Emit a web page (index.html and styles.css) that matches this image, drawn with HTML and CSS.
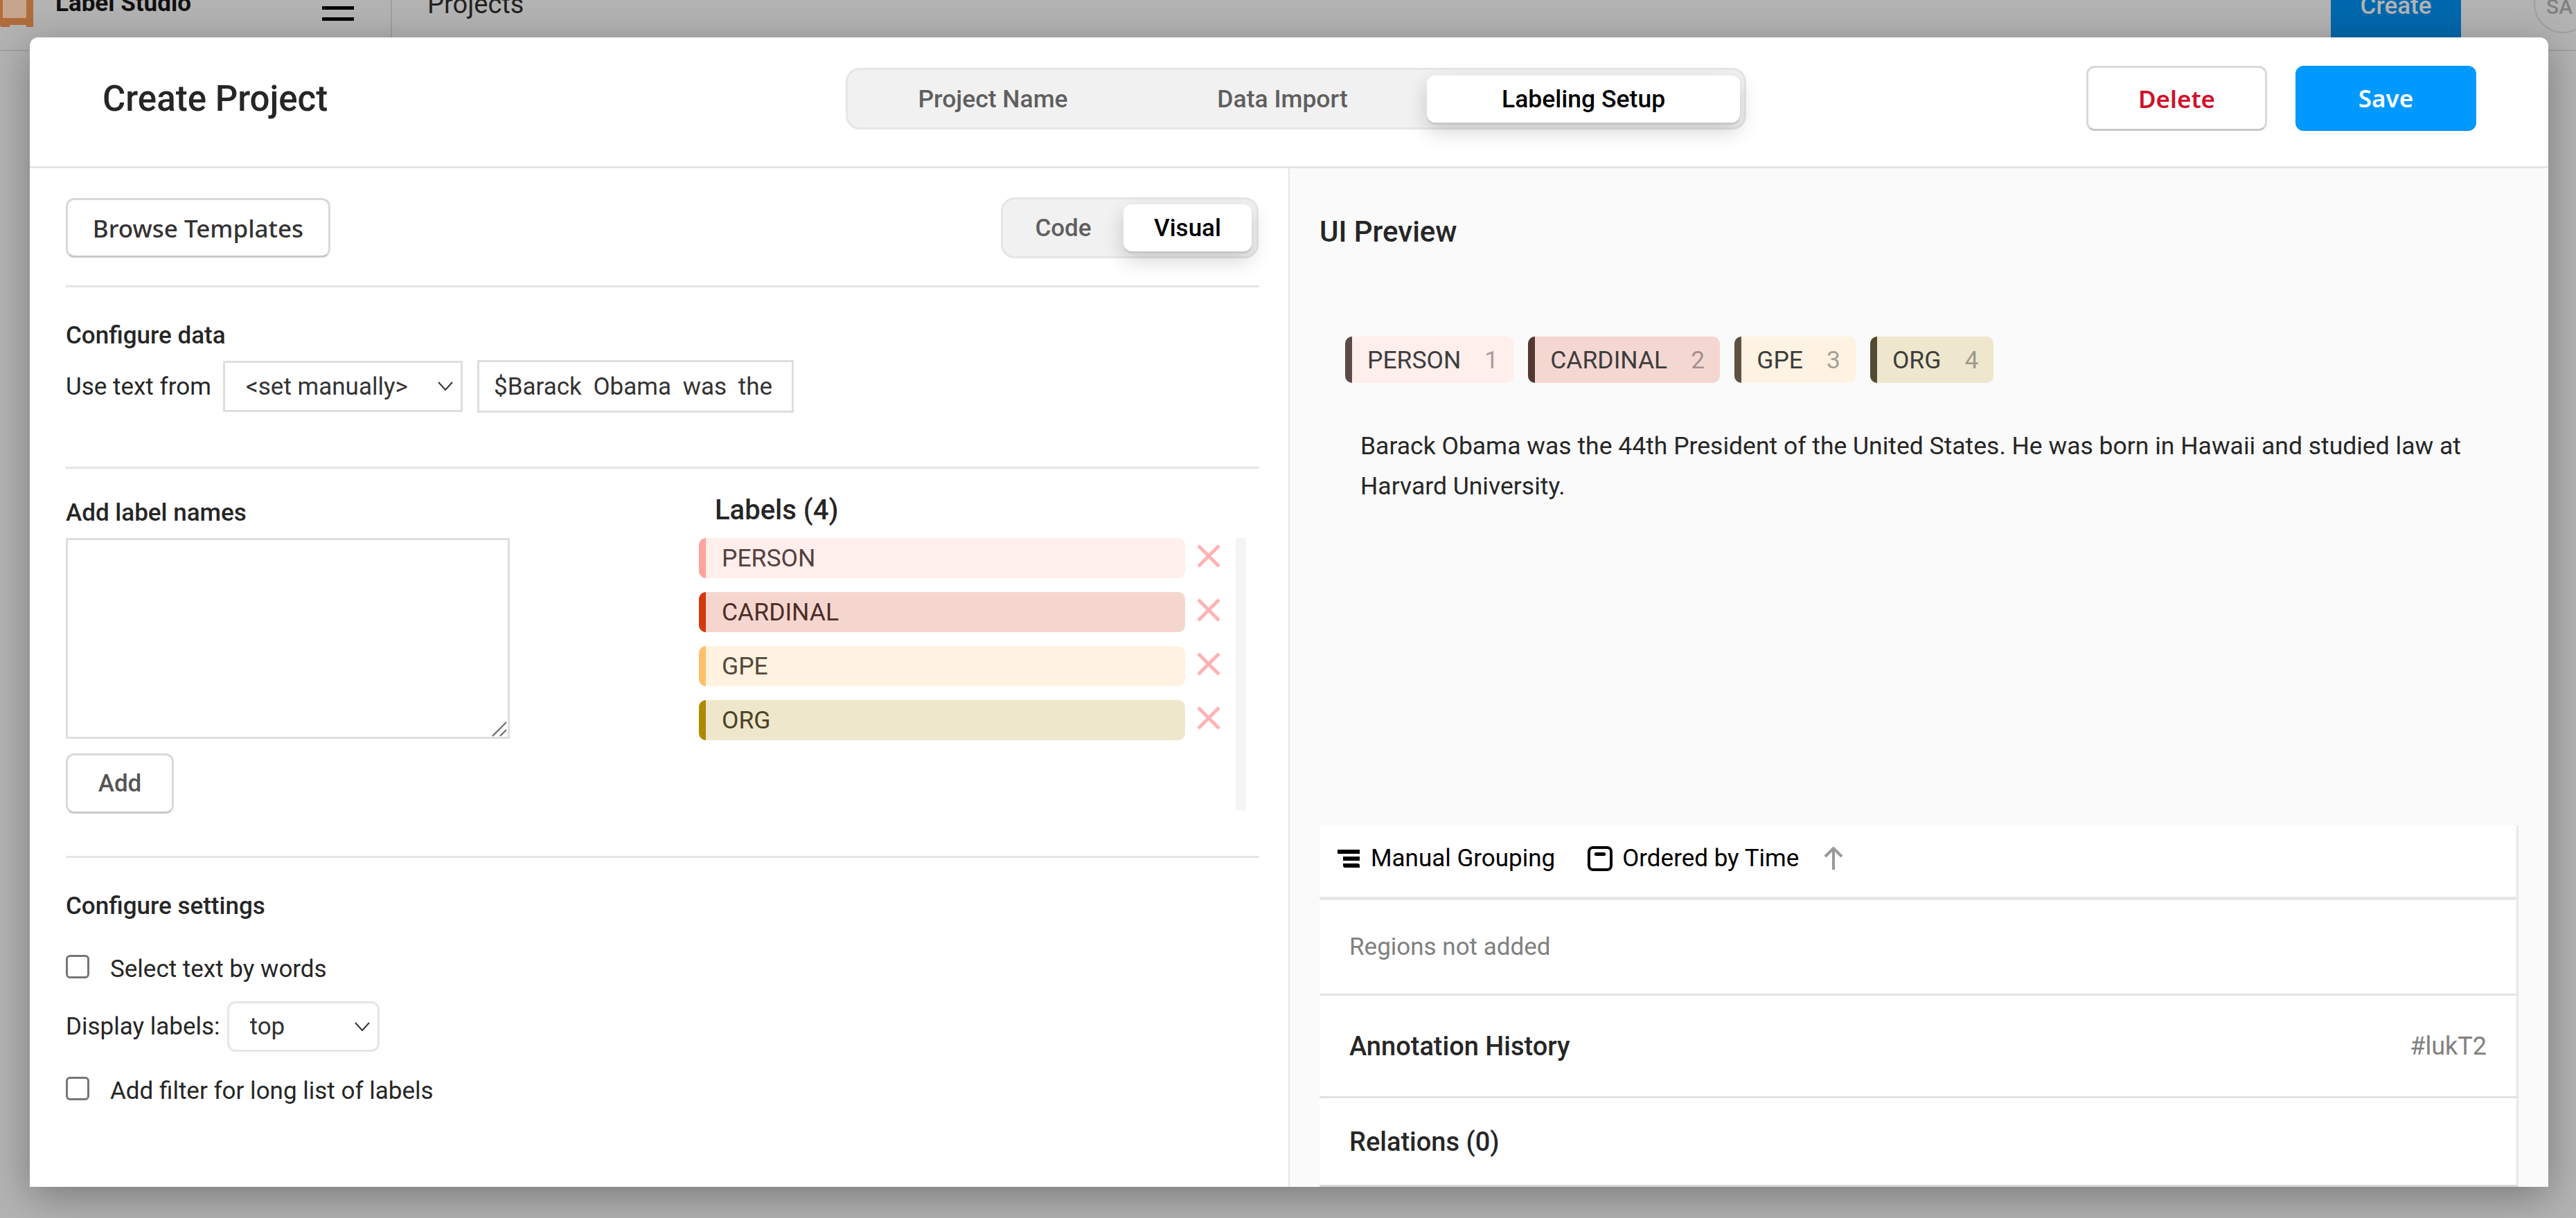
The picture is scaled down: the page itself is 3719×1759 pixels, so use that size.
FILE: index.html
```html
<!DOCTYPE html>
<html>
<head>
<meta charset="utf-8" />
<title>Create Project</title>
<link rel="stylesheet" href="styles.css">
</head>
<body>
	<!-- page behind the dialog -->
	<div class="topbar">
		<svg class="logo" width="49" height="40" viewBox="0 0 49 40"><path d="M4 0h34v26H4z" fill="#c8a48c"/><path d="M0 26h4V0h-4zM38 0h10v39h-10v-3H14v-10h24z" fill="#b06c3c"/><path d="M0 26h14v13H3a3 3 0 0 1-3-3z" fill="#b06c3c"/></svg>
		<span class="brand">Label Studio</span>
		<span class="burger"><i></i><i></i></span>
		<span class="crumb">Projects</span>
		<span class="create">Create</span>
		<span class="avatar">SA</span>
	</div>

	<div class="modal">
		<div class="modal-head">
			<h1 class="modal-title">Create Project</h1>
			<div class="toggle steps">
				<span class="toggle-item">Project Name</span>
				<span class="toggle-item">Data Import</span>
				<span class="toggle-item on">Labeling Setup</span>
			</div>
			<div class="actions">
				<button class="btn btn-delete">Delete</button>
				<button class="btn btn-save">Save</button>
			</div>
		</div>

		<div class="modal-body">
			<div class="config">
				<div class="config-bar">
					<button class="btn btn-browse">Browse Templates</button>
					<div class="toggle modes">
						<span class="toggle-item">Code</span>
						<span class="toggle-item on">Visual</span>
					</div>
				</div>

				<div class="section data">
					<h4 class="section-title">Configure data</h4>
					<div class="data-row">
						<label class="data-label">Use text from</label>
						<span class="select select-field">
							<select><option>&lt;set manually&gt;</option></select>
							<svg class="chevron" width="22" height="14" viewBox="0 0 22 14"><path d="M1 1l10 11L21 1" fill="none" stroke="#333" stroke-width="2"/></svg>
						</span>
						<input class="data-input" type="text" value="$Barack Obama was the 44th President of the United States">
					</div>
				</div>

				<div class="section labels">
					<div class="labels-add">
						<h4 class="section-title">Add label names</h4>
						<div class="area-wrap">
							<textarea class="area"></textarea>
							<svg class="grip" width="22" height="22" viewBox="0 0 22 22"><path d="M1 21L21 1M12 21l9-9" fill="none" stroke="#666" stroke-width="2"/></svg>
						</div>
						<button class="btn btn-add">Add</button>
					</div>
					<div class="labels-list">
						<h3 class="labels-title">Labels (4)</h3>
						<div class="labels-scroll">
							<ul class="rows">
								<li class="row"><span class="row-name c-person">PERSON</span><svg class="del" width="34" height="34" viewBox="0 0 34 34"><path d="M2 2l30 30M32 2L2 32"/></svg></li>
								<li class="row"><span class="row-name c-cardinal">CARDINAL</span><svg class="del" width="34" height="34" viewBox="0 0 34 34"><path d="M2 2l30 30M32 2L2 32"/></svg></li>
								<li class="row"><span class="row-name c-gpe">GPE</span><svg class="del" width="34" height="34" viewBox="0 0 34 34"><path d="M2 2l30 30M32 2L2 32"/></svg></li>
								<li class="row"><span class="row-name c-org">ORG</span><svg class="del" width="34" height="34" viewBox="0 0 34 34"><path d="M2 2l30 30M32 2L2 32"/></svg></li>
							</ul>
							<div class="track"></div>
						</div>
					</div>
				</div>

				<div class="section settings">
					<h4 class="section-title">Configure settings</h4>
					<label class="check"><input type="checkbox"><span>Select text by words</span></label>
					<div class="display-row">
						<span>Display labels:</span>
						<span class="select select-round">
							<select><option>top</option></select>
							<svg class="chevron" width="22" height="14" viewBox="0 0 22 14"><path d="M1 1l10 11L21 1" fill="none" stroke="#333" stroke-width="2"/></svg>
						</span>
					</div>
					<label class="check"><input type="checkbox"><span>Add filter for long list of labels</span></label>
				</div>
			</div>

			<div class="preview">
				<h3 class="preview-title">UI Preview</h3>
				<div class="tags">
					<span class="tag c-person"><b>PERSON</b><em>1</em></span>
					<span class="tag c-cardinal"><b>CARDINAL</b><em>2</em></span>
					<span class="tag c-gpe"><b>GPE</b><em>3</em></span>
					<span class="tag c-org"><b>ORG</b><em>4</em></span>
				</div>
				<p class="sample">Barack Obama was the 44th President of the United States. He was born in Hawaii and studied law at Harvard University.</p>

				<div class="side">
					<div class="side-tools">
						<span class="tool">
							<svg width="32" height="26" viewBox="0 0 32 26"><path d="M0 0h32v6H0zM8 10h24v6H8zM8 20h21a3 3 0 0 1 3 3v3H11a3 3 0 0 1-3-3z"/></svg>
							Manual Grouping
						</span>
						<span class="tool tool-order">
							<svg width="36" height="36" viewBox="0 0 36 36"><rect x="2" y="2" width="32" height="32" rx="6" fill="none" stroke="#000" stroke-width="4"/><rect x="10" y="9" width="16" height="5" rx="2"/></svg>
							Ordered by Time
						</span>
						<svg class="sort" width="28" height="33" viewBox="0 0 28 33"><path d="M14 2v31M2 14L14 2l12 12" fill="none" stroke="#999" stroke-width="4"/></svg>
					</div>
					<div class="side-row side-empty">Regions not added</div>
					<div class="side-row side-history"><strong>Annotation History</strong><span class="side-id">#lukT2</span></div>
					<div class="side-row side-relations"><strong>Relations (0)</strong></div>
				</div>
			</div>
		</div>
	</div>
</body>
</html>
```

FILE: styles.css
```css
*{
	box-sizing:border-box;
}

html,body{
	margin:0;
	padding:0;
	height:100%;
	overflow:hidden;
}

body{
	background:#b3b3b3;
	font-family:Roboto,"Liberation Sans",sans-serif;
	font-size:35px;
	color:#262626;
}

h1,h3,h4,p,ul,li{
	margin:0;
	padding:0;
	list-style:none;
	font-weight:500;
}

/* page behind */
.topbar{
	position:relative;
	height:74px;
	border-bottom:2px solid #a0a0a0;
	overflow:hidden;
}

.logo{
	position:absolute;
	left:0;
	top:0;
}

.brand{
	position:absolute;
	left:80px;
	top:-16px;
	font-size:35px;
	font-weight:700;
	color:#111;
}

.burger{
	position:absolute;
	left:465px;
	top:9px;
}

.burger i{
	display:block;
	width:46px;
	height:5px;
	margin-bottom:11px;
	background:#000;
}

.crumb{
	position:absolute;
	left:617px;
	top:-16px;
	font-size:38px;
	color:#222;
	padding-left:0;
}

.crumb:before{
	content:"";
	position:absolute;
	left:-53px;
	top:0;
	width:2px;
	height:90px;
	background:#a0a0a0;
}

.create{
	position:absolute;
	left:3365px;
	top:-20px;
	width:188px;
	height:90px;
	padding-top:8px;
	border-radius:12px;
	background:#0068ad;
	color:#b3b3b3;
	font-size:35px;
	font-weight:500;
	text-align:center;
}

.avatar{
	position:absolute;
	left:3658px;
	top:-36px;
	width:84px;
	height:84px;
	padding:26px 0 0 16px;
	border:2px solid #a0a0a0;
	border-radius:50%;
	color:#808080;
	font-size:30px;
	font-weight:500;
}

/* dialog */
.modal{
	position:absolute;
	left:43px;
	top:54px;
	width:3636px;
	height:1660px;
	display:flex;
	flex-direction:column;
	overflow:hidden;
	background:#fff;
	border-radius:12px 12px 0 0;
	box-shadow:0 14px 60px rgba(0,0,0,.32);
}

.modal-head{
	flex:none;
	height:189px;
	display:flex;
	align-items:center;
	padding:0 104px 10px 105px;
	border-bottom:3px solid #e5e5e5;
}

.modal-title{
	width:1073px;
	font-size:51px;
	font-weight:500;
}

.toggle{
	display:flex;
	background:#f1f1f1;
	border:3px solid #e6e6e6;
}

.toggle-item{
	display:flex;
	align-items:center;
	justify-content:center;
	font-weight:500;
	color:#5f5f5f;
}

.toggle-item.on{
	background:#fff;
	color:#000;
	box-shadow:0 3px 0 #c8c8c8,0 12px 30px rgba(0,0,0,.18);
}

.steps{
	width:1300px;
	height:89px;
	padding:8px 6px 7px 0;
	border-radius:20px;
}

.steps .toggle-item{
	width:420px;
	border-radius:12px;
	font-size:35.5px;
}

.steps .toggle-item:first-child{
	width:420px;
}

.steps .toggle-item:nth-child(2){
	width:418px;
}

.steps .toggle-item.on{
	width:453px;
}

.actions{
	margin-left:auto;
	display:flex;
	gap:41px;
}

.btn{
	border:3px solid #d9d9d9;
	border-bottom-color:#c9c9c9;
	border-radius:12px;
	background:#fff;
	font-family:"Noto Sans",Roboto,sans-serif;
	font-weight:500;
	font-size:35px;
	color:#333;
	padding:0;
}

.btn-delete,.btn-save{
	width:261px;
	height:94px;
	font-weight:600;
}

.btn-delete{
	color:#d0112b;
}

.btn-save{
	background:#0099ff;
	border:none;
	border-bottom:2px solid #0090f0;
	color:#fff;
}

.modal-body{
	flex:1;
	min-height:0;
	display:flex;
}

/* left pane */
.config{
	flex:none;
	width:1819px;
	padding:0 42px 0 52px;
	border-right:2px solid #e5e5e5;
}

.config-bar{
	height:172px;
	display:flex;
	align-items:flex-start;
	justify-content:space-between;
	padding-top:43px;
	border-bottom:3px solid #e5e5e5;
}

.btn-browse{
	width:382px;
	height:86px;
}

.modes{
	width:372px;
	height:88px;
	margin:-1px 1px 0 0;
	padding:7px 7px 7px 0;
	border-radius:20px;
}

.modes .toggle-item{
	width:174px;
	border-radius:12px;
	font-size:35px;
}

.modes .toggle-item.on{
	width:185px;
}

.section-title{
	font-size:35px;
	line-height:42px;
}

.section{
	border-bottom:3px solid #e5e5e5;
}

.data{
	height:262px;
	padding-top:49px;
}

.data-row{
	display:flex;
	align-items:center;
	margin-top:14px;
}

.data-label{
	width:227px;
}

.select{
	position:relative;
	display:block;
}

.select select{
	appearance:none;
	display:block;
	width:100%;
	height:100%;
	background:#fff;
	font:inherit;
	color:#333;
	border:3px solid #dedede;
}

.chevron{
	position:absolute;
	top:50%;
	right:14px;
	margin-top:-7px;
}

.select-field{
	width:346px;
	height:74px;
}

.select-field select{
	padding-left:30px;
}

.data-input{
	width:457px;
	height:76px;
	margin-left:21px;
	padding:0 21px;
	border:3px solid #dedede;
	background:#fff;
	font:inherit;
	color:#333;
	word-spacing:8px;
}

.labels{
	height:562px;
	display:flex;
	padding-top:43px;
}

.labels-add{
	width:914px;
}

.area-wrap{
	position:relative;
	width:641px;
	height:290px;
	margin-top:15px;
}

.area{
	display:block;
	width:100%;
	height:100%;
	border:3px solid #dedede;
	resize:none;
	background:#fff;
}

.grip{
	position:absolute;
	right:4px;
	bottom:3px;
}

.btn-add{
	display:block;
	width:156px;
	height:87px;
	margin-top:21px;
	font-family:Roboto,sans-serif;
	color:#555;
}

.labels-title{
	margin:-8px 0 0 23px;
	font-size:40px;
	line-height:50px;
	font-weight:500;
}

.labels-scroll{
	display:flex;
	margin-top:15px;
}

.rows{
	width:775px;
	display:flex;
	flex-direction:column;
	gap:20px;
}

.row{
	display:flex;
	align-items:center;
	gap:17px;
}

.row-name{
	flex:none;
	width:702px;
	height:58px;
	line-height:58px;
	padding-left:23px;
	border-left:10px solid;
	border-radius:10px;
	font-weight:400;
	font-size:35.5px;
}

.del{
	margin-top:-7px;
}

.del path{
	fill:none;
	stroke:#ffb3b3;
	stroke-width:5;
}

.track{
	width:15px;
	height:393px;
	background:#f5f5f5;
}

.c-person{
	background:#ffeeec;
	border-color:#ffa39e;
	color:#54413f;
}

.c-cardinal{
	background:#f5d6cf;
	border-color:#d4380d;
	color:#4b2d26;
}

.c-gpe{
	background:#fff2e1;
	border-color:#ffc069;
	color:#54483a;
}

.c-org{
	background:#efe7cb;
	border-color:#ad8b00;
	color:#4a4228;
}

.settings{
	border:none;
	padding-top:49px;
}

.check{
	display:flex;
	align-items:center;
	height:40px;
	margin-top:49px;
}

.check input{
	appearance:none;
	flex:none;
	width:34px;
	height:34px;
	margin:-6px 30px 0 0;
	border:3px solid #767676;
	border-radius:6px;
	background:#fff;
}

.display-row{
	display:flex;
	align-items:center;
	margin-top:27px;
}

.select-round{
	width:220px;
	height:73px;
	margin-left:10px;
}

.select-round select{
	padding-left:30px;
	border-radius:12px;
	border-color:#e6e6e6;
}

.display-row + .check{
	margin-top:36px;
}

/* right pane */
.preview{
	flex:1;
	min-width:0;
	display:flex;
	flex-direction:column;
	padding:0 43px 0 43px;
	background:#fafafa;
}

.preview-title{
	margin-top:67px;
	font-size:42px;
	line-height:50px;
	font-weight:500;
}

.tags{
	display:flex;
	gap:21px;
	margin:126px 0 0 37px;
}

.tag{
	height:67px;
	display:flex;
	align-items:center;
	gap:34px;
	padding:0 22px;
	border-left:10px solid;
	border-radius:10px;
	opacity:.95;
}

.tag b{
	font-weight:400;
	font-size:35.5px;
	color:#333;
}

.tag em{
	font-style:normal;
	font-size:35.5px;
	color:#333;
	opacity:.45;
}

.sample{
	margin:62px 0 0 59px;
	width:1650px;
	font-weight:400;
	font-size:35.5px;
	line-height:58px;
}

.side{
	margin-top:auto;
	height:522px;
	background:#fff;
	border-right:3px solid #e8e8e8;
	border-bottom:3px solid #d8d8d8;
}

.side-tools{
	height:108px;
	display:flex;
	align-items:center;
	padding:0 0 8px 26px;
	border-bottom:5px solid #e8e8e8;
	color:#000;
}

.tool{
	display:flex;
	align-items:center;
	gap:16px;
}

.tool-order{
	margin-left:47px;
	gap:14px;
}

.sort{
	margin-left:36px;
}

.side-row{
	display:flex;
	align-items:center;
	justify-content:space-between;
	padding:0 43px;
	border-bottom:3px solid #e2e2e2;
}

.side-row strong{
	font-weight:500;
	font-size:38px;
}

.side-empty{
	height:138px;
	color:#808080;
}

.side-history{
	height:148px;
}

.side-id{
	font-size:36px;
	color:#808080;
}

.side-relations{
	border:none;
	height:126px;
}
```
